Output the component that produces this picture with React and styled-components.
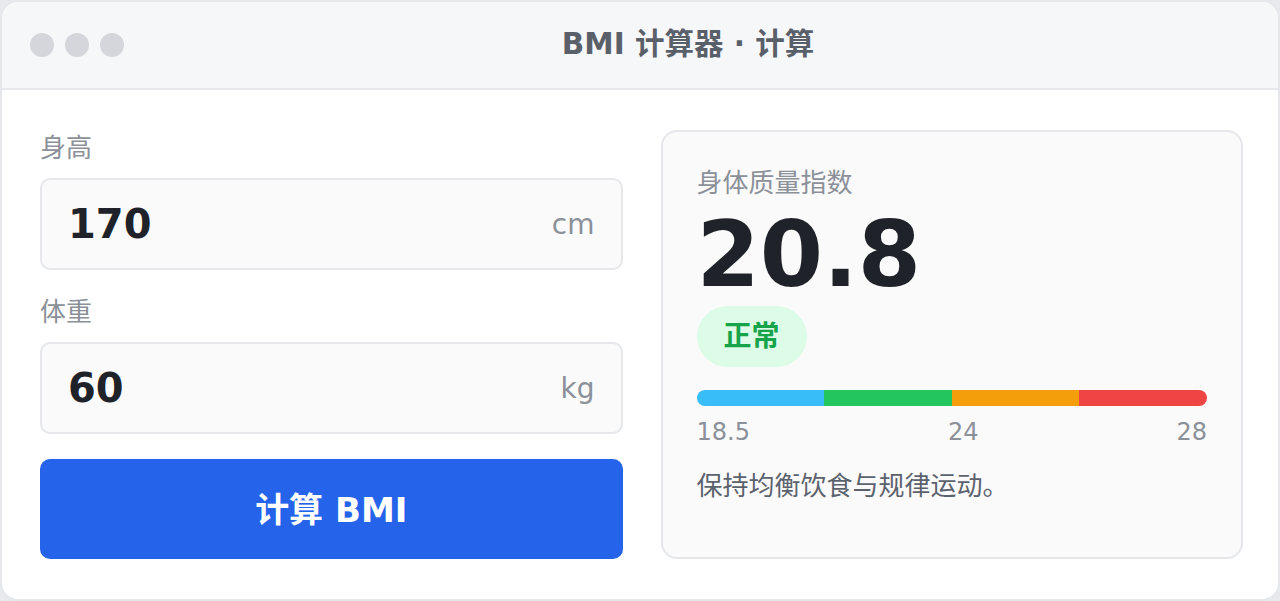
import React from "react";
import styled, { createGlobalStyle } from "styled-components";

const Global = createGlobalStyle`
  * { box-sizing: border-box; }
  html, body { margin: 0; padding: 0; background: #e8e9ed; }
  body { font-family: "DejaVu Sans", "Noto Sans CJK SC", sans-serif; }
`;

const Window = styled.div`
  width: 1280px;
  height: 601px;
  border: 2px solid #e5e7eb;
  border-radius: 18px;
  background: #ffffff;
  overflow: hidden;
  display: flex;
  flex-direction: column;
`;

const TitleBar = styled.header`
  height: 88px;
  flex: none;
  display: flex;
  align-items: center;
  padding: 0 28px;
  background: #f6f7f9;
  border-bottom: 2px solid #e5e7eb;
`;

const Dots = styled.div`
  display: flex;
  gap: 11px;
`;

const Dot = styled.span`
  width: 24px;
  height: 24px;
  border-radius: 50%;
  background: #d4d6dc;
`;

const Title = styled.h1`
  flex: 1;
  margin: 0 0 0 2px;
  text-align: center;
  font-size: 29.5px;
  font-weight: 700;
  color: #5a606a;
  line-height: 1;
`;

const Body = styled.main`
  flex: 1;
  display: grid;
  grid-template-columns: 1fr 1fr;
  gap: 38px;
  padding: 40px 35px 41px 38px;
`;

const Form = styled.section`
  display: flex;
  flex-direction: column;
`;

const Field = styled.div`
  display: flex;
  flex-direction: column;
  gap: 12px;
  margin-bottom: 24px;
`;

const Label = styled.div`
  font-size: 26px;
  line-height: 36px;
  color: #8b9099;
`;

const InputBox = styled.div`
  height: 92px;
  display: flex;
  align-items: center;
  justify-content: space-between;
  padding: 0 26px;
  border: 2px solid #e5e7eb;
  border-radius: 10px;
  background: #fafafa;
`;

const Value = styled.span`
  font-size: 40px;
  font-weight: 700;
  color: #1f2329;
`;

const Unit = styled.span`
  font-size: 28px;
  color: #8b9099;
`;

const Button = styled.button`
  margin-top: 1px;
  height: 100px;
  padding: 0 0 4px;
  border: none;
  border-radius: 10px;
  background: #2563eb;
  color: #ffffff;
  font-family: "DejaVu Sans", "Noto Sans CJK SC", sans-serif;
  font-size: 34px;
  font-weight: 700;
  cursor: pointer;
`;

const Card = styled.section`
  border: 2px solid #e5e7eb;
  border-radius: 16px;
  background: #fafafa;
  padding: 33px 34px;
  display: flex;
  flex-direction: column;
`;

const CardLabel = styled.div`
  font-size: 26px;
  line-height: 36px;
  color: #8b9099;
`;

const BigValue = styled.div`
  margin-top: 8px;
  font-size: 91px;
  line-height: 92px;
  font-weight: 700;
  color: #1f2329;
`;

const Badge = styled.span`
  align-self: flex-start;
  margin-top: 5px;
  height: 61px;
  line-height: 61px;
  padding: 0 27px;
  border-radius: 999px;
  background: #dcfce7;
  color: #16a34a;
  font-size: 28px;
  font-weight: 700;
`;

const Bar = styled.div`
  margin-top: 23px;
  height: 16px;
  border-radius: 8px;
  overflow: hidden;
  display: flex;
`;

const Segment = styled.span`
  flex: 1;
  background: ${(p) => p.$color};
`;

const Scale = styled.div`
  margin-top: 10px;
  display: flex;
  justify-content: space-between;
  font-size: 24px;
  line-height: 32px;
  color: #8b9099;
`;

const Tip = styled.p`
  margin: 20px 0 0;
  font-size: 26px;
  line-height: 36px;
  color: #5c626d;
`;

export default function App() {
  return (
    <>
      <Global />
      <Window>
        <TitleBar>
          <Dots>
            <Dot />
            <Dot />
            <Dot />
          </Dots>
          <Title>BMI 计算器 · 计算</Title>
        </TitleBar>
        <Body>
          <Form>
            <Field>
              <Label>身高</Label>
              <InputBox>
                <Value>170</Value>
                <Unit>cm</Unit>
              </InputBox>
            </Field>
            <Field>
              <Label>体重</Label>
              <InputBox>
                <Value>60</Value>
                <Unit>kg</Unit>
              </InputBox>
            </Field>
            <Button>计算 BMI</Button>
          </Form>
          <Card>
            <CardLabel>身体质量指数</CardLabel>
            <BigValue>20.8</BigValue>
            <Badge>正常</Badge>
            <Bar>
              <Segment $color="#38bdf8" />
              <Segment $color="#22c55e" />
              <Segment $color="#f59e0b" />
              <Segment $color="#ef4444" />
            </Bar>
            <Scale>
              <span>18.5</span>
              <span>24</span>
              <span>28</span>
            </Scale>
            <Tip>保持均衡饮食与规律运动。</Tip>
          </Card>
        </Body>
      </Window>
    </>
  );
}
